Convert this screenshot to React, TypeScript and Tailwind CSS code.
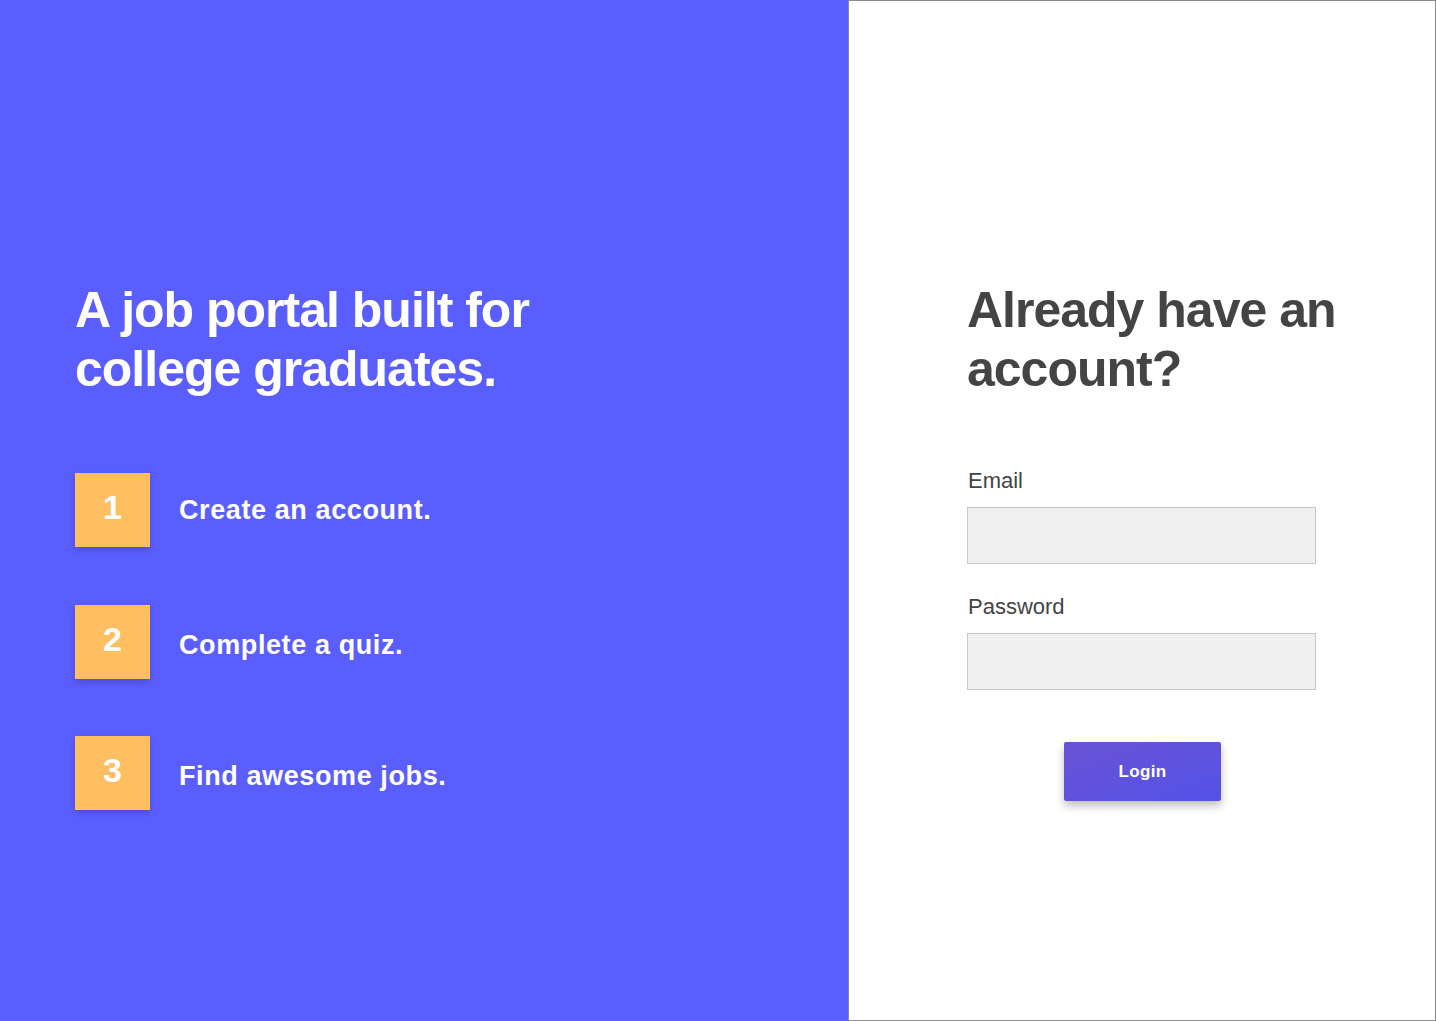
const steps = [
  { n: "1", text: "Create an account." },
  { n: "2", text: "Complete a quiz." },
  { n: "3", text: "Find awesome jobs." },
];

export default function App() {
  return (
    <div className="flex h-screen w-full font-['Liberation_Sans',Arial,sans-serif]">
      {/* left: pitch */}
      <div className="w-[848px] shrink-0 bg-[#5a5efe] pl-[75px] pt-[281px]">
        <h1 className="text-[50px] font-bold leading-[59px] tracking-[-1px] text-white">
          A job portal built for
          <br />
          college graduates.
        </h1>
        <ul className="mt-[74px] flex flex-col gap-[57.5px]">
          {steps.map((s, i) => (
            <li key={s.n} className="flex items-center gap-[29px]">
              <div className="flex h-[74px] w-[75px] items-center justify-center bg-[#ffbe60] pb-[5px] text-[34px] font-bold text-white shadow-[0_3px_6px_rgba(0,0,0,0.18)]">
                {s.n}
              </div>
              <span
                className={
                  i === 0
                    ? "text-[27px] font-bold tracking-[0.6px] text-white"
                    : "pt-[7px] text-[27px] font-bold tracking-[0.6px] text-white"
                }
              >
                {s.text}
              </span>
            </li>
          ))}
        </ul>
      </div>

      {/* right: login */}
      <div className="flex-1 border border-[#8a8a8a] bg-white pl-[118px] pt-[280px]">
        <h2 className="text-[50px] font-bold leading-[59px] tracking-[-1px] text-[#444]">
          Already have an
          <br />
          account?
        </h2>
        <form className="mt-[68px] flex w-[349px] flex-col">
          <label className="pl-px text-[22px] leading-[28px] text-[#444]">Email</label>
          <input
            type="email"
            className="mt-[12px] h-[57px] w-full border border-[#c8c8c8] bg-[#f0f0f0] outline-none"
          />
          <label className="mt-[29px] pl-px text-[22px] leading-[28px] text-[#444]">Password</label>
          <input
            type="password"
            className="mt-[12px] h-[57px] w-full border border-[#c8c8c8] bg-[#f0f0f0] outline-none"
          />
          <button
            type="button"
            className="ml-[97px] mt-[52px] h-[59px] w-[157px] rounded-[2px] bg-gradient-to-br from-[#6952d4] to-[#5452e8] text-[17px] font-bold tracking-[0.3px] text-white shadow-[0_5px_8px_rgba(0,0,0,0.25)]"
          >
            Login
          </button>
        </form>
      </div>
    </div>
  );
}
